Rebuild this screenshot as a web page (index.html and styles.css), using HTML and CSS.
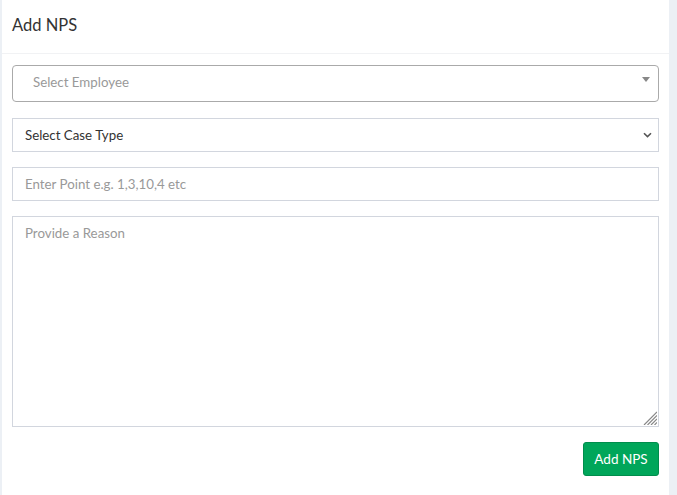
FILE: index.html
```html
<!DOCTYPE html>
<html>
<head>
<meta charset="utf-8">
<link rel="stylesheet" href="styles.css">
</head>
<body>
<div class="page">
  <div class="card">
    <div class="card-header">Add NPS</div>
    <div class="card-body">
      <div class="group">
        <div class="select2">
          <span class="s2-placeholder">Select Employee</span>
          <span class="s2-arrow"></span>
        </div>
      </div>
      <div class="group">
        <div class="select">
          <span>Select Case Type</span>
          <svg class="chev" width="9" height="6" viewBox="0 0 9 6"><path d="M1 1.2 L4.5 4.6 L8 1.2" fill="none" stroke="#555" stroke-width="1.6"/></svg>
        </div>
      </div>
      <div class="group">
        <input class="control" type="text" placeholder="Enter Point e.g. 1,3,10,4 etc">
      </div>
      <div class="group area-wrap">
        <textarea class="control area" placeholder="Provide a Reason"></textarea>
        <svg class="grip" width="14" height="14" viewBox="0 0 14 14"><path d="M1 14 L14 1 M4.5 14 L14 4.5 M8 14 L14 8 M11.5 14 L14 11.5" stroke="#888" stroke-width="1.2" fill="none"/></svg>
      </div>
      <div class="actions">
        <button class="btn">Add NPS</button>
      </div>
    </div>
  </div>
</div>
</body>
</html>
```
FILE: styles.css
```css
* { box-sizing: border-box; }
html, body { margin: 0; padding: 0; }
body {
  background: #ecf0f5;
  font-family: "Lato", "Open Sans", sans-serif;
  color: #212529;
}
.page {
  padding: 0 8px 0 2px;
  min-height: 495px;
  display: flex;
}
.card {
  background: #fff;
  flex: 1;
  display: flex;
  flex-direction: column;
}
.card-header {
  height: 54px;
  padding: 0 10px 3px;
  display: flex;
  align-items: center;
  font-size: 16.5px;
  color: #333;
  border-bottom: 1px solid #f1f2f4;
}
.card-body {
  padding: 11px 10px 19px 10px;
  flex: 1;
}
.group { margin-bottom: 15px; }
.group:first-child { margin-bottom: 16px; }
.select2 {
  height: 37px;
  border: 1px solid #aaa;
  border-radius: 4px;
  position: relative;
  display: flex;
  align-items: center;
  padding: 0 0 3px 20px;
  font-size: 13.3px;
}
.s2-placeholder { color: #999; }
.s2-arrow {
  position: absolute;
  right: 8px;
  top: 11px;
  width: 0; height: 0;
  border-left: 4px solid transparent;
  border-right: 4px solid transparent;
  border-top: 5px solid #888;
}
.select {
  height: 34px;
  border: 1px solid #d2d6de;
  display: flex;
  align-items: center;
  justify-content: space-between;
  padding: 0 6px 1px 12px;
  font-size: 13.3px;
  color: #333;
}
.chev { margin-top: 1px; }
.control {
  display: block;
  width: 100%;
  height: 34px;
  border: 1px solid #d2d6de;
  border-radius: 0;
  padding: 6px 12px;
  font-family: inherit;
  font-size: 13.3px;
  color: #555;
  outline: none;
}
.control::placeholder { color: #999; }
.area-wrap { position: relative; }
.area {
  height: 211px;
  resize: none;
  padding: 8px 12px;
}
.grip {
  position: absolute;
  right: 2px;
  bottom: 2px;
}
.actions {
  display: flex;
  justify-content: flex-end;
}
.btn {
  width: 76px;
  height: 34px;
  background: #00a65a;
  border: 1px solid #008d4c;
  border-radius: 3px;
  color: #fff;
  font-family: inherit;
  font-size: 13.5px;
  padding: 0;
}
```
